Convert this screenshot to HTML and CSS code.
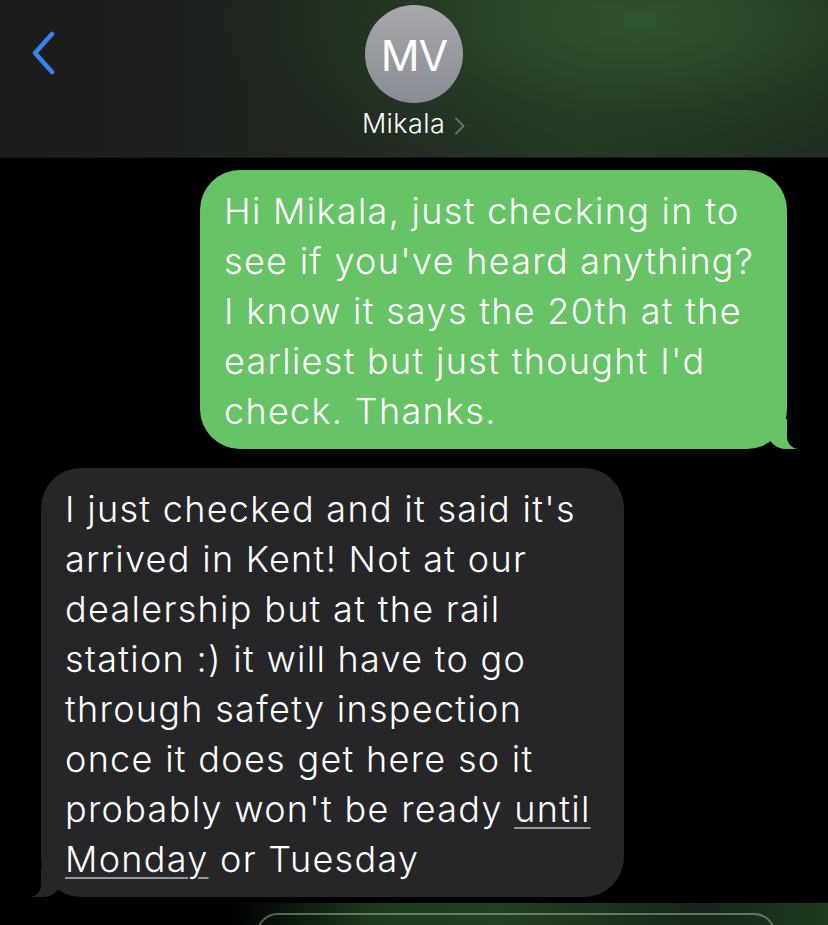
FILE: index.html
```html
<!DOCTYPE html>
<html lang="en">
<head>
  <meta charset="UTF-8" />
  <meta name="viewport" content="width=device-width, initial-scale=1.0"/>
  <title>Mikala</title>
  <link rel="stylesheet" href="styles.css">
</head>
<body>
  <div class="screen">
    <!-- Conversation header -->
    <header class="chat-header">
      <div class="back">
        <svg width="28" height="44" viewBox="0 0 28 44">
          <path d="M22 3 L5 22 L22 41" fill="none" stroke="#3c7ff0" stroke-width="4.5" stroke-linecap="round" stroke-linejoin="round"/>
        </svg>
      </div>
      <div class="contact">
        <div class="avatar">MV</div>
        <div class="name">Mikala
          <svg class="chev" width="12" height="18" viewBox="0 0 12 18">
            <path d="M2 1.5 L9.5 9 L2 16.5" fill="none" stroke="#6c706d" stroke-width="2" stroke-linecap="round" stroke-linejoin="round"/>
          </svg>
        </div>
      </div>
      <div></div>
    </header>

    <!-- Messages -->
    <main class="messages">
      <div class="bubble sent">
        Hi Mikala, just checking in to<br>
        see if you've heard anything?<br>
        I know it says the 20th at the<br>
        earliest but just thought I'd<br>
        check. Thanks.
      </div>

      <div class="bubble received">
        I just checked and it said it's<br>
        arrived in Kent! Not at our<br>
        dealership but at the rail<br>
        station :) it will have to go<br>
        through safety inspection<br>
        once it does get here so it<br>
        probably won't be ready <span class="detected">until</span><br>
        <span class="detected">Monday</span> or Tuesday
      </div>
    </main>

    <!-- Input bar (cut off) -->
    <footer class="input-bar">
      <div class="input-field"></div>
    </footer>
  </div>
</body>
</html>
```

FILE: styles.css
```css
body {
  margin: 0;
  padding: 0;
  background-color: #000;
  font-family: Inter, Roboto, "Liberation Sans", sans-serif;
  color: #fff;
}

.screen {
  width: 828px;
  height: 925px;
  overflow: hidden;
  display: flex;
  flex-direction: column;
}

.chat-header {
  height: 157px;
  flex-shrink: 0;
  display: grid;
  grid-template-columns: 1fr auto 1fr;
  background:
    radial-gradient(ellipse 420px 170px at 640px 20px, rgba(48, 86, 46, 0.95), rgba(40, 66, 38, 0.55) 55%, rgba(30, 36, 30, 0) 100%),
    linear-gradient(90deg, #1b1b1b 0%, #1f251f 35%, #243524 70%, #1e2a1e 100%);
  border-bottom: 1px solid #141614;
}

.back {
  padding: 31px 0 0 30px;
}

.contact {
  display: flex;
  flex-direction: column;
  align-items: center;
  padding-top: 5px;
}

.avatar {
  width: 98px;
  height: 98px;
  border-radius: 50%;
  background: linear-gradient(180deg, #a7a9ae 0%, #898c92 100%);
  display: flex;
  align-items: center;
  justify-content: center;
  font-size: 43px;
  font-weight: 400;
  letter-spacing: -1px;
  color: #fff;
  padding-top: 2px;
  box-sizing: border-box;
}

.name {
  margin-top: 5px;
  font-size: 27px;
  line-height: 32px;
  letter-spacing: 0.4px;
  font-weight: 300;
  color: #fff;
  display: flex;
  align-items: center;
  gap: 9px;
}

.chev {
  margin-top: 3px;
}

.messages {
  display: flex;
  flex-direction: column;
  padding: 12px 41px 0 41px;
  gap: 19px;
}

.bubble {
  position: relative;
  font-size: 36px;
  font-weight: 300;
  line-height: 50px;
  letter-spacing: 1.3px;
  padding: 16px 18px 13px 24px;
  border-radius: 40px;
  box-sizing: border-box;
}

.sent {
  align-self: flex-end;
  width: 587px;
  background-color: #66c466;
  color: #fff;
}

.received {
  align-self: flex-start;
  width: 583px;
  background-color: #262628;
  color: #fff;
}

/* bubble tails */
.bubble::before,
.bubble::after {
  content: "";
  position: absolute;
  bottom: 0;
  height: 30px;
}

.sent::before {
  right: -11px;
  width: 30px;
  background-color: #66c466;
  border-bottom-left-radius: 18px 16px;
}

.sent::after {
  right: -30px;
  width: 30px;
  background-color: #000;
  border-bottom-left-radius: 12px;
}

.received::before {
  left: -10px;
  width: 30px;
  background-color: #262628;
  border-bottom-right-radius: 18px 16px;
}

.received::after {
  left: -30px;
  width: 30px;
  background-color: #000;
  border-bottom-right-radius: 12px;
}

.detected {
  text-decoration: underline;
  text-decoration-color: #96969a;
  text-decoration-thickness: 2px;
  text-underline-offset: 5px;
}

.input-bar {
  margin-top: 6px;
  flex: 1;
  background: linear-gradient(90deg, #000 0%, #000 28%, #1c3a1d 45%, #22401f 60%, #16261a 85%, #1e3a1f 100%);
  padding: 10px 0 0 256px;
}

.input-field {
  width: 520px;
  height: 44px;
  border: 2px solid rgba(190, 200, 190, 0.45);
  border-radius: 22px;
  box-sizing: border-box;
}
```
